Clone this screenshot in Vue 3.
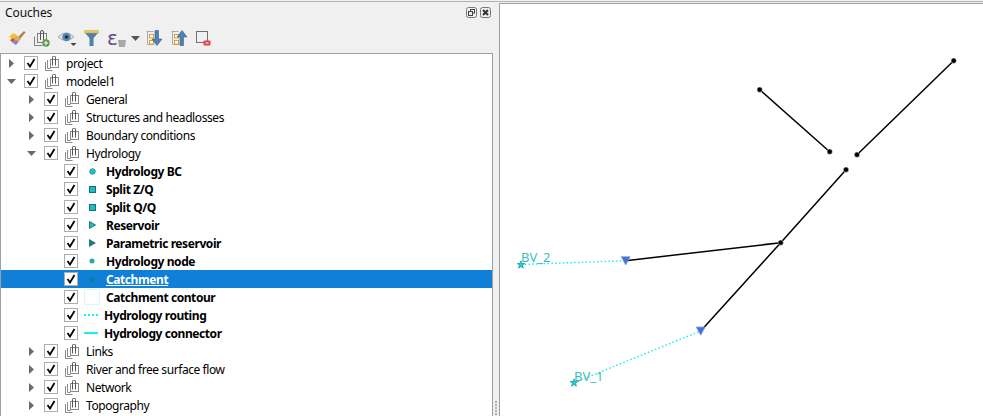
<template>
  <div class="app">
    <section class="panel">
      <header class="panel__title">
        <span>Couches</span>
        <span class="panel__buttons">
          <svg width="11" height="11" viewBox="0 0 11 11" fill="none" stroke="#444">
            <rect x="0.5" y="0.5" width="10" height="10" rx="2" stroke="#777" />
            <rect x="4.5" y="2.5" width="4" height="3.5" />
            <rect x="2.5" y="4.5" width="4" height="4" fill="#eee" />
          </svg>
          <svg width="11" height="11" viewBox="0 0 11 11" fill="none">
            <rect x="0.5" y="0.5" width="10" height="10" rx="2" stroke="#777" />
            <path d="M3 3l5 5M8 3l-5 5" stroke="#333" stroke-width="2" />
          </svg>
        </span>
      </header>

      <div class="toolbar">
        <!-- broom -->
        <span class="tool">
          <svg width="18" height="16" viewBox="0 0 18 16">
            <path d="M9 8l7-7 1.500 1.500L11 10z" fill="#b08040" />
            <path d="M2 6l5-2 6 5-4 5z" fill="#e2a766" />
            <path d="M1 7l4-4 4 3-5 3z" fill="#e8c92e" />
            <path d="M2 10l3-2 2 2-2 3z" fill="#d84a4a" />
            <path d="M5 13l3-3 2 2-2 3z" fill="#6c86c8" />
          </svg>
        </span>
        <!-- add group -->
        <span class="tool">
          <svg width="16" height="17" viewBox="0 0 16 17" fill="none" stroke="#808080">
            <path d="M0.500 6.500v9h8" />
            <rect x="3.500" y="3.500" width="9" height="9" fill="#f0f0f0" />
            <path d="M6.500 10V2a1.500 1.500 0 0 1 3 0v8" stroke="#555" />
            <circle cx="12" cy="13" r="3.700" fill="#5b9a4c" stroke="none" />
            <path d="M9.800 13h4.400M12 10.800v4.400" stroke="#fff" />
          </svg>
        </span>
        <!-- eye -->
        <span class="tool">
          <svg width="20" height="17" viewBox="0 0 20 17">
            <path d="M1 7q8-8 16 0q-8 7-16 0z" fill="#e6e6e6" stroke="#aaa" />
            <circle cx="9.500" cy="7" r="4.300" fill="#5c86b8" />
            <circle cx="9.500" cy="7" r="1.800" fill="#1d2a3c" />
            <path d="M13.500 13h6l-3 3z" fill="#444" />
          </svg>
        </span>
        <!-- filter -->
        <span class="tool">
          <svg width="15" height="16" viewBox="0 0 15 16">
            <path d="M1 3h13L9.500 8v8h-4V8z" fill="#4f81a8" />
            <path d="M0.500 0.500h14v2.500H.5z" fill="#e8c85a" stroke="#c9a840" stroke-width="0.500" />
          </svg>
        </span>
        <!-- expression filter -->
        <span class="tool tool--epsilon">
          <span class="epsilon">&#949;</span>
          <svg width="8" height="7" viewBox="0 0 8 7"><path d="M0 0h8L7 7H1z" fill="#a8a8a8" /></svg>
        </span>
        <span class="tool tool--caret">
          <svg width="9" height="5" viewBox="0 0 9 5"><path d="M0 0h9L4.500 5z" fill="#555" /></svg>
        </span>
        <!-- expand all -->
        <span class="tool">
          <svg width="18" height="16" viewBox="0 0 18 16" fill="none">
            <path d="M1.500 1.500h7M2.500 1.500v13h7" stroke="#aaa" />
            <rect x="4.500" y="4.500" width="4" height="3.500" fill="#fff" stroke="#e69a2e" />
            <rect x="4.500" y="10.500" width="4" height="3.500" fill="#fff" stroke="#e69a2e" />
            <path d="M10 0.500h3.500V9H17l-5 6.500L7 9h3z" fill="#4f81b4" stroke="#36618c" stroke-width="0.600" />
          </svg>
        </span>
        <!-- collapse all -->
        <span class="tool">
          <svg width="18" height="16" viewBox="0 0 18 16" fill="none">
            <path d="M1.500 1.500h7M2.500 1.500v13h7" stroke="#aaa" />
            <rect x="4.500" y="4.500" width="4" height="3.500" fill="#fff" stroke="#e69a2e" />
            <rect x="4.500" y="10.500" width="4" height="3.500" fill="#fff" stroke="#e69a2e" />
            <path d="M10 15.500h3.500V7H17L12 .5 7 7h3z" fill="#4f81b4" stroke="#36618c" stroke-width="0.600" />
          </svg>
        </span>
        <!-- remove layer -->
        <span class="tool">
          <svg width="15" height="15" viewBox="0 0 15 15" fill="none">
            <rect x="0.500" y="0.500" width="11" height="11" stroke="#707070" />
            <rect x="7.500" y="9.500" width="7" height="5" rx="1" fill="#e0444a" />
            <path d="M9.500 12h3" stroke="#fff" />
          </svg>
        </span>
      </div>

      <ul class="tree">
        <li
          v-for="row in rows"
          :key="row.label"
          class="row"
          :class="[`row--level${row.level}`, { 'row--selected': row.selected }]"
        >
          <span class="row__arrow">
            <svg v-if="row.open === false" width="5" height="9" viewBox="0 0 5 9"><path d="M0 0l5 4.500L0 9z" fill="#6a6a6a" /></svg>
            <svg v-else-if="row.open" width="9" height="5" viewBox="0 0 9 5"><path d="M0 0h9L4.500 5z" fill="#6a6a6a" /></svg>
          </span>
          <span class="row__check">
            <svg width="10" height="10" viewBox="0 0 10 10"><path d="M1.500 5l2.500 3.500L8.500 1" fill="none" stroke="#000" stroke-width="1.800" /></svg>
          </span>

          <svg v-if="row.open !== undefined" class="row__group" width="14" height="15" viewBox="0 0 14 15" fill="none" stroke="#8a8a8a">
            <path d="M0.500 6v8.500h7" />
            <path d="M2.500 4v8.500h3" />
            <rect x="5.500" y="3.500" width="8" height="8" />
            <path d="M7.500 9.500v-8a1.500 1.500 0 0 1 3 0v8" stroke="#555" />
          </svg>

          <span v-else class="row__symbol" :class="`row__symbol--${row.symbol}`">
            <svg v-if="row.symbol === 'dot'" width="7" height="7" viewBox="0 0 8 8"><circle cx="4" cy="4" r="3.200" fill="#19c4cc" stroke="#2d8a90" /></svg>
            <svg v-if="row.symbol === 'node'" width="6" height="6" viewBox="0 0 6 6"><circle cx="3" cy="3" r="2.500" fill="#2aa7ad" /></svg>
            <svg v-if="row.symbol === 'square'" width="7" height="7" viewBox="0 0 7 7"><rect x="0.500" y="0.500" width="6" height="6" fill="#16c0c8" stroke="#1f6e72" /></svg>
            <svg v-if="row.symbol === 'tri'" width="7" height="8" viewBox="0 0 7 8"><path d="M0.500 0.500l6 3.500-6 3.500z" fill="#23b9c0" stroke="#26777c" /></svg>
            <svg v-if="row.symbol === 'tri-dark'" width="7" height="8" viewBox="0 0 7 8"><path d="M0 0l7 4-7 4z" fill="#23787d" /></svg>
            <svg v-if="row.symbol === 'star'" width="7" height="7" viewBox="0 0 10 10"><path d="M5 0l1.500 3.500H10L7 6l1 4-3-2-3 2 1-4-3-2.500h3.500z" fill="#0a7f90" /></svg>
            <span v-if="row.symbol === 'contour'" class="contour"></span>
            <span v-if="row.symbol === 'dash'" class="dash"></span>
            <span v-if="row.symbol === 'line'" class="solid"></span>
          </span>

          <span class="row__label" :class="{ 'row__label--bold': row.open === undefined }">{{ row.label }}</span>
        </li>
      </ul>
    </section>

    <div class="splitter">
      <i v-for="n in 5" :key="n"></i>
    </div>

    <main class="canvas">
      <!-- map canvas: positions below are the content itself -->
      <svg class="map" width="484" height="413" viewBox="499 3 484 413">
        <g stroke="#19f0f0" stroke-width="1.500" stroke-dasharray="1.500 2.300" fill="none">
          <path d="M521 264.500L625.700 260.700" />
          <path d="M574 382.700L700.700 331" />
        </g>
        <g stroke="#000" stroke-width="1.500" fill="none">
          <path d="M759.700 89.700L829.700 151.700" />
          <path d="M953.700 60.700L857 154.700" />
          <path d="M846 169.700L780.700 242.700L700.700 331" />
          <path d="M780.700 242.700L625.700 260.700" />
        </g>
        <g fill="#000" stroke="#ddd" stroke-width="0.500">
          <circle v-for="p in nodes" :key="p[0]" :cx="p[0]" :cy="p[1]" r="2.600" />
        </g>
        <path d="M621.200 256.700h9l-4.500 8.300z" fill="#3f72e0" stroke="#8da0c0" stroke-width="0.700" />
        <path d="M696.200 327h9l-4.500 8.300z" fill="#3f72e0" stroke="#8da0c0" stroke-width="0.700" />
        <g fill="#14d4dc" stroke="#1f8f96" stroke-width="0.700">
          <path v-for="s in stars" :key="s[0]" :transform="`translate(${s[0]} ${s[1]})`" d="M0-3.800l1 2.600h2.800L1.600 .6l.8 2.900L0 1.800l-2.400 1.700.8-2.900-2.200-1.800H-1z" />
        </g>
        <text x="521" y="262" class="map__label">BV_2</text>
        <text x="574" y="380.500" class="map__label">BV_1</text>
      </svg>
    </main>
  </div>
</template>

<script setup>
const rows = [
  { label: 'project', level: 0, open: false },
  { label: 'modelel1', level: 0, open: true },
  { label: 'General', level: 1, open: false },
  { label: 'Structures and headlosses', level: 1, open: false },
  { label: 'Boundary conditions', level: 1, open: false },
  { label: 'Hydrology', level: 1, open: true },
  { label: 'Hydrology BC', level: 2, symbol: 'dot' },
  { label: 'Split Z/Q', level: 2, symbol: 'square' },
  { label: 'Split Q/Q', level: 2, symbol: 'square' },
  { label: 'Reservoir', level: 2, symbol: 'tri' },
  { label: 'Parametric reservoir', level: 2, symbol: 'tri-dark' },
  { label: 'Hydrology node', level: 2, symbol: 'node' },
  { label: 'Catchment', level: 2, symbol: 'star', selected: true },
  { label: 'Catchment contour', level: 2, symbol: 'contour' },
  { label: 'Hydrology routing', level: 2, symbol: 'dash' },
  { label: 'Hydrology connector', level: 2, symbol: 'line' },
  { label: 'Links', level: 1, open: false },
  { label: 'River and free surface flow', level: 1, open: false },
  { label: 'Network', level: 1, open: false },
  { label: 'Topography', level: 1, open: false }
]

const nodes = [
  [759.7, 89.7],
  [829.7, 151.7],
  [953.7, 60.7],
  [857, 154.7],
  [846, 169.7],
  [780.7, 242.7]
]

const stars = [
  [521, 264.7],
  [574, 382.7]
]
</script>

<style>
html,
body {
  margin: 0;
  height: 100%;
  overflow: hidden;
  background: #f0f0f0;
}
</style>

<style scoped>
.app {
  display: flex;
  width: 983px;
  height: 415px;
  margin-top: 1px;
  overflow: hidden;
  background: #f0f0f0;
  font-family: "Noto Sans", "Open Sans", sans-serif;
  font-size: 12px;
  color: #000;
  border-top: 1px solid #b4b4b4;
  box-sizing: border-box;
}

.panel {
  display: flex;
  flex-direction: column;
  width: 493px;
  flex: none;
}

.panel__title {
  display: flex;
  align-items: center;
  justify-content: space-between;
  height: 21px;
  padding: 0 2px 0 5px;
  font-family: "Noto Sans", sans-serif;
  font-size: 12px;
  letter-spacing: -0.100px;
  color: #111;
}

.panel__buttons {
  display: flex;
  gap: 3px;
}

.toolbar {
  display: flex;
  align-items: center;
  height: 30px;
  padding-left: 4px;
}

.tool {
  display: flex;
  align-items: center;
  justify-content: center;
  flex: none;
  width: 25px;
}

.tool--epsilon {
  align-items: flex-end;
  gap: 0;
  height: 18px;
}

.tool--caret {
  width: 12px;
}

.epsilon {
  font-family: "DejaVu Sans", sans-serif;
  font-size: 20px;
  line-height: 18px;
  color: #6b4a82;
}

.tree {
  flex: 1;
  margin: 0;
  padding: 0;
  list-style: none;
  background: #fff;
  border: 1px solid #a0a0a0;
  border-bottom: 0;
  overflow: hidden;
}

.row {
  display: flex;
  align-items: center;
  height: 18px;
}

.row--level0 {
  padding-left: 6px;
}

.row--level1 {
  padding-left: 26px;
}

.row--level2 {
  padding-left: 46px;
}

.row--selected {
  background: #0f7fd8;
}

.row__arrow {
  display: flex;
  align-items: center;
  justify-content: center;
  width: 9px;
  height: 9px;
  margin-right: 8px;
}

.row__check {
  display: flex;
  align-items: center;
  justify-content: center;
  box-sizing: border-box;
  width: 14px;
  height: 14px;
  margin-right: 7px;
  background: #fff;
  border: 1px solid #adadad;
}

.row__group {
  flex: none;
  margin-right: 7px;
}

.row__symbol {
  display: flex;
  align-items: center;
  justify-content: center;
  flex: none;
  width: 16px;
  margin-right: 6px;
  margin-left: -1px;
}

.row__symbol--dash,
.row__symbol--line {
  justify-content: flex-start;
  margin-right: 4px;
}

.row__label {
  white-space: nowrap;
  letter-spacing: -0.420px;
}

.row__label--bold {
  font-weight: 700;
}

.row--selected .row__label {
  color: #fff;
  text-decoration: underline;
}

.contour {
  display: block;
  box-sizing: border-box;
  width: 16px;
  height: 16px;
  border: 1px solid #d4fbfb;
}

.dash {
  display: block;
  width: 14px;
  border-top: 2px dotted #19f0f0;
}

.solid {
  display: block;
  width: 14px;
  border-top: 2px solid #19f0f0;
}

.splitter {
  display: flex;
  flex-direction: column;
  justify-content: flex-end;
  align-items: center;
  gap: 1px;
  flex: none;
  width: 6px;
  padding-bottom: 1px;
  box-sizing: border-box;
}

.splitter i {
  display: block;
  width: 2px;
  height: 2px;
  background: #b0b0b0;
}

.canvas {
  flex: 1;
  position: relative;
  margin-top: 1px;
  background: #fff;
  border-left: 1px solid #a0a0a0;
  border-top: 1px solid #a0a0a0;
}

.map {
  position: absolute;
  left: -1px;
  top: -1px;
}

.map__label {
  font-family: "Noto Sans", sans-serif;
  font-size: 13px;
  fill: #3dbdbd;
}
</style>
